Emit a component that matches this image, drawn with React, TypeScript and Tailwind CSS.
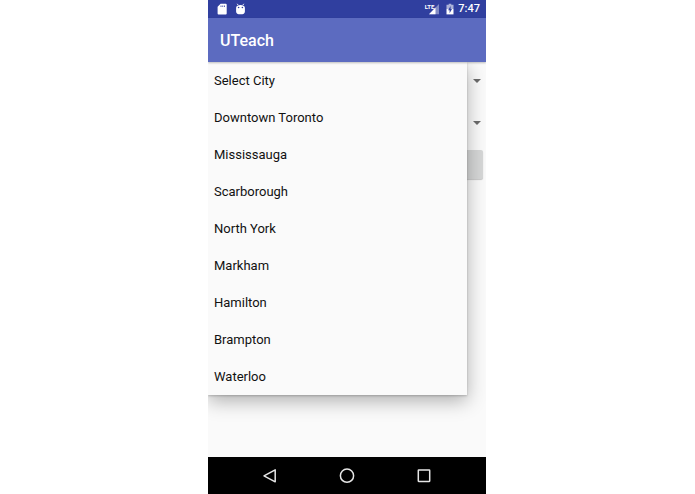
import React, { useState } from 'react';

const cities = [
  'Select City',
  'Downtown Toronto',
  'Mississauga',
  'Scarborough',
  'North York',
  'Markham',
  'Hamilton',
  'Brampton',
  'Waterloo',
];

const StatusBar: React.FC = () => (
  <div className="flex h-[18px] items-center justify-between bg-[#303f9f] pl-2 pr-1.5 text-white">
    <div className="flex items-center gap-1.5">
      {/* SD card */}
      <svg viewBox="0 0 12 12" className="h-3 w-3" fill="currentColor">
        <path
          fillRule="evenodd"
          d="M4.6 0.8H9.8Q10.7 0.8 10.7 1.7V10.6Q10.7 11.5 9.8 11.5H2.5Q1.6 11.5 1.6 10.6V3.8ZM4.6 2.5V4.1H5.4V2.5ZM6.4 2.5V4.1H7.2V2.5ZM8.2 2.5V4.1H9V2.5Z"
        />
      </svg>
      {/* Android debugging */}
      <svg viewBox="0 0 12 12" className="h-3 w-3" fill="currentColor">
        <path d="M3.2 0.8L4.2 2.2M9.8 0.8L8.8 2.2" stroke="currentColor" strokeWidth="0.9" />
        <path
          fillRule="evenodd"
          d="M2.1 4.8C2.1 1.1 10.9 1.1 10.9 4.8V8.4Q10.9 11.3 6.5 11.3Q2.1 11.3 2.1 8.4ZM4.6 3.7A0.8 0.8 0 1 0 4.6 5.3A0.8 0.8 0 1 0 4.6 3.7ZM8.4 3.7A0.8 0.8 0 1 0 8.4 5.3A0.8 0.8 0 1 0 8.4 3.7Z"
        />
      </svg>
    </div>
    <div className="flex items-center gap-0.5">
      <div className="mr-0.5 flex items-start">
        <span className="text-[6px] font-bold leading-[8px]">LTE</span>
        <svg viewBox="0 0 11 12" className="-ml-1.5 h-3 w-3">
          <path d="M10.5 1V11.3H0.5Z" fill="#fff" fillOpacity="0.4" />
          <path d="M7 4.6V11.3H0.5Z" fill="#fff" />
        </svg>
      </div>
      {/* Charging battery */}
      <svg viewBox="0 0 12 12" className="h-3 w-3">
        <path d="M4.7 0.8H7.3V1.8H9.5V6H2.5V1.8H4.7Z" fill="#fff" fillOpacity="0.6" />
        <path d="M2.5 6H9.5V11.4H2.5Z" fill="#fff" />
        <path d="M6.6 3L4.1 7.2H5.6V10.2L8 6H6.6Z" fill="#303f9f" />
      </svg>
      <span className="text-[11px] font-medium leading-[18px]">7:47</span>
    </div>
  </div>
);

type SpinnerProps = {
  label: string;
  value: string;
  options: string[];
  onChange: (value: string) => void;
};

const Spinner: React.FC<SpinnerProps> = ({ label, value, options, onChange }) => (
  <div className="relative">
    <select
      aria-label={label}
      value={value}
      onChange={(e) => onChange(e.target.value)}
      className="h-[38px] w-full appearance-none bg-transparent px-1.5 text-[13px] text-[#111]"
    >
      {options.map((option) => (
        <option key={option}>{option}</option>
      ))}
    </select>
    <svg
      viewBox="0 0 8 4"
      className="pointer-events-none absolute right-[5px] top-[17px] h-1 w-2"
      fill="#6b6b6b"
    >
      <path d="M0 0H8L4 4Z" />
    </svg>
  </div>
);

const NavigationBar: React.FC = () => (
  <nav className="flex h-[37px] items-center justify-center gap-[57px] bg-black">
    <button aria-label="Back">
      <svg viewBox="0 0 20 20" className="h-5 w-5" fill="none" stroke="#e6e6e6" strokeWidth="1.5">
        <path d="M15.2 3.8V15.8L4 9.8Z" strokeLinejoin="round" />
      </svg>
    </button>
    <button aria-label="Home">
      <svg viewBox="0 0 20 20" className="h-5 w-5" fill="none" stroke="#e6e6e6" strokeWidth="1.5">
        <circle cx="10" cy="9.7" r="6.6" />
      </svg>
    </button>
    <button aria-label="Recent apps">
      <svg viewBox="0 0 20 20" className="h-5 w-5" fill="none" stroke="#e6e6e6" strokeWidth="1.5">
        <rect x="4.3" y="4" width="11.4" height="11.4" rx="0.4" />
      </svg>
    </button>
  </nav>
);

const App: React.FC = () => {
  const [city, setCity] = useState(cities[0]);
  const [subject, setSubject] = useState('');
  const [menuOpen, setMenuOpen] = useState(true);

  const handleSelect = (name: string) => {
    setCity(name);
    setMenuOpen(false);
  };

  return (
    <div className="min-h-screen bg-white pr-px font-['Roboto',sans-serif]">
      <div className="mx-auto flex min-h-screen w-full max-w-[278px] flex-col overflow-hidden bg-[#fafafa]">
        <StatusBar />
        <header className="relative z-20 flex h-11 items-center bg-[#5c6bc0] px-3 pt-0.5 shadow-[0_1px_2px_rgba(0,0,0,0.25)]">
          <h1 className="text-[16px] font-medium leading-[20px] text-white">UTeach</h1>
        </header>

        <main className="relative flex-1">
          <form className="flex flex-col gap-1" onSubmit={(e) => e.preventDefault()}>
            <Spinner label="City" value={city} options={cities} onChange={setCity} />
            <Spinner label="Subject" value={subject} options={['']} onChange={setSubject} />
            <button
              type="submit"
              aria-label="Search"
              className="mx-[3px] mt-1 h-[29px] rounded-xs bg-[#d6d7d7] shadow-[0_1px_1px_rgba(0,0,0,0.2)]"
            />
          </form>

          {menuOpen && (
            <ul className="absolute left-0 right-[19px] top-0 z-10 bg-[#fafafa] shadow-[0_1px_2px_rgba(0,0,0,0.2),0_6px_18px_rgba(0,0,0,0.3)]">
              {cities.map((name) => (
                <li key={name}>
                  <button
                    onClick={() => handleSelect(name)}
                    className="flex h-[37px] w-full items-center px-1.5 text-[13px] leading-[20px] text-[#111]"
                  >
                    {name}
                  </button>
                </li>
              ))}
            </ul>
          )}
        </main>

        <NavigationBar />
      </div>
    </div>
  );
};

export default App;
